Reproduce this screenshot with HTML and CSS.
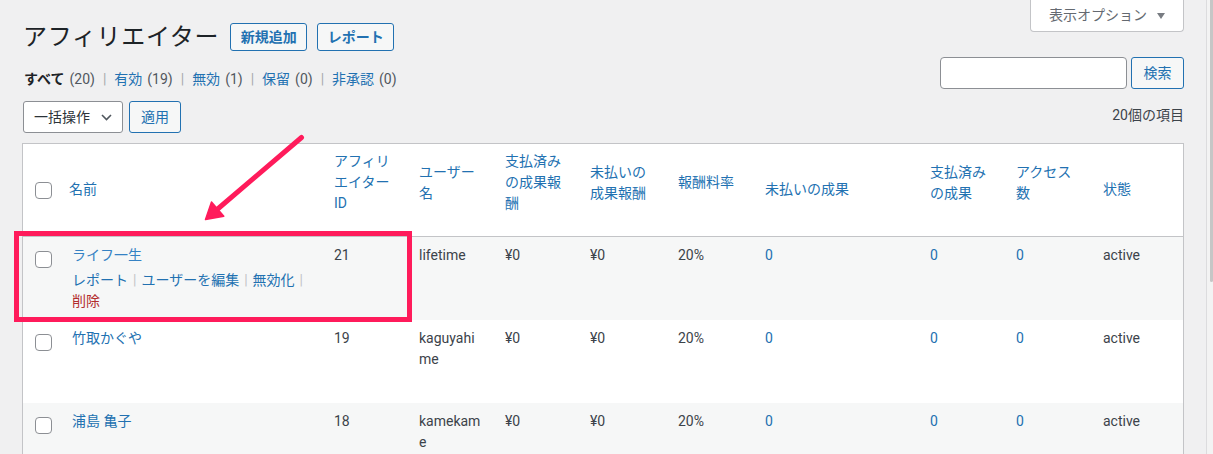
FILE: index.html
```html
<!DOCTYPE html>
<html lang="ja">
<head>
<meta charset="utf-8">
<title>アフィリエイター</title>
<link rel="stylesheet" href="styles.css">
</head>
<body>
<div class="page">
  <main class="wrap">
    <div class="top-row">
      <div class="heading">
        <h1 class="title">アフィリエイター</h1>
        <a class="btn btn-title" href="#">新規追加</a>
        <a class="btn btn-title" href="#">レポート</a>
      </div>
      <div class="screen-options">表示オプション<svg class="tri" width="8" height="6" viewBox="0 0 8 6"><path d="M0 0h8L4 6z" fill="#787c82"/></svg></div>
    </div>

    <div class="filter-row">
      <ul class="views">
        <li><span class="current">すべて</span><span class="count">(20)</span><span class="sep">|</span></li>
        <li><a href="#">有効</a><span class="count">(19)</span><span class="sep">|</span></li>
        <li><a href="#">無効</a><span class="count">(1)</span><span class="sep">|</span></li>
        <li><a href="#">保留</a><span class="count">(0)</span><span class="sep">|</span></li>
        <li><a href="#">非承認</a><span class="count">(0)</span></li>
      </ul>
      <form class="search">
        <input class="search-input" type="search" aria-label="検索">
        <button class="btn btn-search" type="button">検索</button>
      </form>
    </div>

    <div class="nav-row">
      <div class="bulk">
        <div class="select">一括操作<svg width="11" height="7" viewBox="0 0 11 7"><path d="M1 1l4.5 4.5L10 1" fill="none" stroke="#50575e" stroke-width="1.6"/></svg></div>
        <button class="btn btn-apply" type="button">適用</button>
      </div>
      <div class="items">20個の項目</div>
    </div>

    <table class="list">
      <colgroup>
        <col class="c-check"><col class="c-name"><col class="c-id"><col class="c-user"><col class="c-paid"><col class="c-unpaid"><col class="c-rate"><col class="c-unref"><col class="c-paidref"><col class="c-visits"><col>
      </colgroup>
      <thead>
        <tr>
          <th class="check"><input class="cb" type="checkbox"></th>
          <th>名前</th>
          <th><span class="sort">アフィリエイターID</span></th>
          <th><span class="sort">ユーザー名</span></th>
          <th><span class="sort">支払済みの成果報酬</span></th>
          <th><span class="sort">未払いの成果報酬</span></th>
          <th><span class="sort">報酬料率</span></th>
          <th>未払いの成果</th>
          <th><span class="sort">支払済みの成果</span></th>
          <th><span class="sort">アクセス数</span></th>
          <th>状態</th>
        </tr>
      </thead>
      <tbody>
        <tr class="alt">
          <td class="check"><input class="cb" type="checkbox"></td>
          <td class="name"><a class="name-link hover" href="#">ライフ一生</a>
            <div class="row-actions"><a href="#">レポート</a><span class="rsep">|</span><a href="#">ユーザーを編集</a><span class="rsep">|</span><a href="#">無効化</a><span class="rsep">|</span><a class="del" href="#">削除</a></div>
          </td>
          <td>21</td>
          <td class="user">lifetime</td>
          <td>¥0</td>
          <td>¥0</td>
          <td>20%</td>
          <td><a href="#">0</a></td>
          <td><a href="#">0</a></td>
          <td><a href="#">0</a></td>
          <td>active</td>
        </tr>
        <tr>
          <td class="check"><input class="cb" type="checkbox"></td>
          <td class="name"><a class="name-link" href="#">竹取かぐや</a>
            <div class="row-actions off"><a href="#">レポート</a><span class="rsep">|</span><a href="#">ユーザーを編集</a><span class="rsep">|</span><a href="#">無効化</a><span class="rsep">|</span><a class="del" href="#">削除</a></div>
          </td>
          <td>19</td>
          <td class="user">kaguyahime</td>
          <td>¥0</td>
          <td>¥0</td>
          <td>20%</td>
          <td><a href="#">0</a></td>
          <td><a href="#">0</a></td>
          <td><a href="#">0</a></td>
          <td>active</td>
        </tr>
        <tr class="alt">
          <td class="check"><input class="cb" type="checkbox"></td>
          <td class="name"><a class="name-link" href="#">浦島 亀子</a>
            <div class="row-actions off"><a href="#">レポート</a><span class="rsep">|</span><a href="#">ユーザーを編集</a><span class="rsep">|</span><a href="#">無効化</a><span class="rsep">|</span><a class="del" href="#">削除</a></div>
          </td>
          <td>18</td>
          <td class="user">kamekame</td>
          <td>¥0</td>
          <td>¥0</td>
          <td>20%</td>
          <td><a href="#">0</a></td>
          <td><a href="#">0</a></td>
          <td><a href="#">0</a></td>
          <td>active</td>
        </tr>
      </tbody>
    </table>
  </main>

  <div class="scrollbar"><div class="thumb"></div></div>

  <div class="callout"></div>
  <svg class="arrow" width="1213" height="454" viewBox="0 0 1213 454">
    <line x1="301.5" y1="137.5" x2="216.5" y2="210" stroke="#ff1b5b" stroke-width="5" stroke-linecap="round"/>
    <polygon points="205.5,219.5 211.5,202 223.8,216.2" fill="#ff1b5b" stroke="#ff1b5b" stroke-width="1.5" stroke-linejoin="round"/>
  </svg>
</div>
</body>
</html>
```

FILE: styles.css
```css
* { box-sizing: border-box; }

html, body {
  margin: 0;
  height: 100%;
  overflow: hidden;
}

body {
  background: #f0f0f1;
  color: #3c434a;
  font-family: Roboto, "Noto Sans CJK JP", sans-serif;
  font-size: 14px;
  line-height: 21px;
}

a { color: #2271b1; text-decoration: none; }

.page {
  position: relative;
  display: flex;
  height: 454px;
}

.wrap {
  flex: 1;
  min-width: 0;
  padding: 0 22px;
}

/* top row */
.top-row {
  display: flex;
  justify-content: space-between;
  align-items: flex-start;
}

.heading {
  display: flex;
  align-items: center;
  height: 28px;
  margin-top: 23px;
}

.title {
  margin: 0 11px 0 1px;
  font-size: 24px;
  font-weight: 400;
  line-height: 28px;
  letter-spacing: 0.7px;
  color: #1d2327;
}

.btn {
  display: inline-flex;
  align-items: center;
  justify-content: center;
  height: 32px;
  padding: 0 11px;
  border: 1px solid #2271b1;
  border-radius: 3px;
  background: #f6f7f7;
  color: #2271b1;
  font-family: inherit;
  font-size: 14px;
  line-height: 1;
}

.btn-title {
  height: 28px;
  padding: 0 9.5px;
  margin-right: 10px;
  font-weight: 600;
}

.screen-options {
  display: flex;
  align-items: center;
  height: 32px;
  padding: 0 18px;
  background: #fff;
  border: 1px solid #c3c4c7;
  border-top: 0;
  border-radius: 0 0 4px 4px;
  color: #646970;
}

.tri { margin-left: 10px; }

/* filter row */
.filter-row {
  display: flex;
  justify-content: space-between;
  align-items: flex-start;
  margin-top: 6px;
}

.views {
  display: flex;
  margin: 12px 0 0 2px;
  padding: 0;
  list-style: none;
}

.views li { display: flex; }

.views .current {
  color: #1d2327;
  font-weight: 600;
}

.views .count {
  margin-left: 5px;
  color: #50575e;
}

.views .sep {
  margin: 0 8px;
  color: #a7aaad;
}

.search {
  display: flex;
  gap: 4px;
  margin: 0;
}

.search-input {
  width: 187px;
  height: 32px;
  margin: 0;
  border: 1px solid #8c8f94;
  border-radius: 4px;
  background: #fff;
}

.btn-search { padding: 0 11.5px; }

/* nav row */
.nav-row {
  display: flex;
  justify-content: space-between;
  align-items: flex-start;
  margin-top: 11px;
}

.bulk {
  display: flex;
  gap: 6px;
  margin-left: 1px;
}

.select {
  display: flex;
  align-items: center;
  justify-content: space-between;
  width: 100px;
  height: 32px;
  padding: 0 10px;
  border: 1px solid #8c8f94;
  border-radius: 3px;
  background: #fff;
  color: #2c3338;
}

.btn-apply { padding: 0 11px; }

.items {
  margin-top: 4px;
  color: #3c434a;
}

/* table */
.list {
  width: 100%;
  margin-top: 10px;
  border: 1px solid #c3c4c7;
  border-collapse: separate;
  border-spacing: 0;
  table-layout: fixed;
  background: #fff;
}

.c-check { width: 36px; }
.c-name { width: 265px; }
.c-id { width: 85px; }
.c-user { width: 86px; }
.c-paid { width: 85px; }
.c-unpaid { width: 88px; }
.c-rate { width: 87px; }
.c-unref { width: 165px; }
.c-paidref { width: 86px; }
.c-visits { width: 87px; }

.list th {
  padding: 7px 10px 8px;
  border-bottom: 1px solid #c3c4c7;
  color: #2271b1;
  font-weight: 400;
  text-align: left;
  vertical-align: middle;
}

.list th .sort {
  display: block;
  padding-bottom: 14px;
}

.list td {
  padding: 8px 10px;
  vertical-align: top;
  overflow-wrap: anywhere;
}

.list tr.alt td { background: #f6f7f7; }

.list th.check { padding: 0 0 0 12px; }
.list td.check { padding: 14px 0 0 12px; }

.cb {
  appearance: none;
  -webkit-appearance: none;
  display: block;
  width: 17px;
  height: 17px;
  margin: 0;
  border: 1px solid #8c8f94;
  border-radius: 4px;
  background: #fff;
}

.list td.name { padding-left: 13px; }

.name-link.hover { color: #3582c4; }

.row-actions {
  margin-top: 4px;
}

.row-actions.off { visibility: hidden; }

.rsep {
  margin: 0 5px;
  color: #c3c4c7;
}

.row-actions .del { color: #b32d2e; }

/* scrollbar */
.scrollbar {
  flex: 0 0 7px;
  padding-left: 3px;
  border-left: 1px solid #dcdcde;
  background: #f3f3f3;
}

.thumb {
  width: 3px;
  height: 282px;
  border-radius: 0 0 2px 2px;
  background: #c6c6c6;
}

/* annotations */
.callout {
  position: absolute;
  left: 14px;
  top: 231px;
  width: 398px;
  height: 91px;
  border: 5px solid #ff1b5b;
  pointer-events: none;
}

.arrow {
  position: absolute;
  left: 0;
  top: 0;
  pointer-events: none;
}
```
